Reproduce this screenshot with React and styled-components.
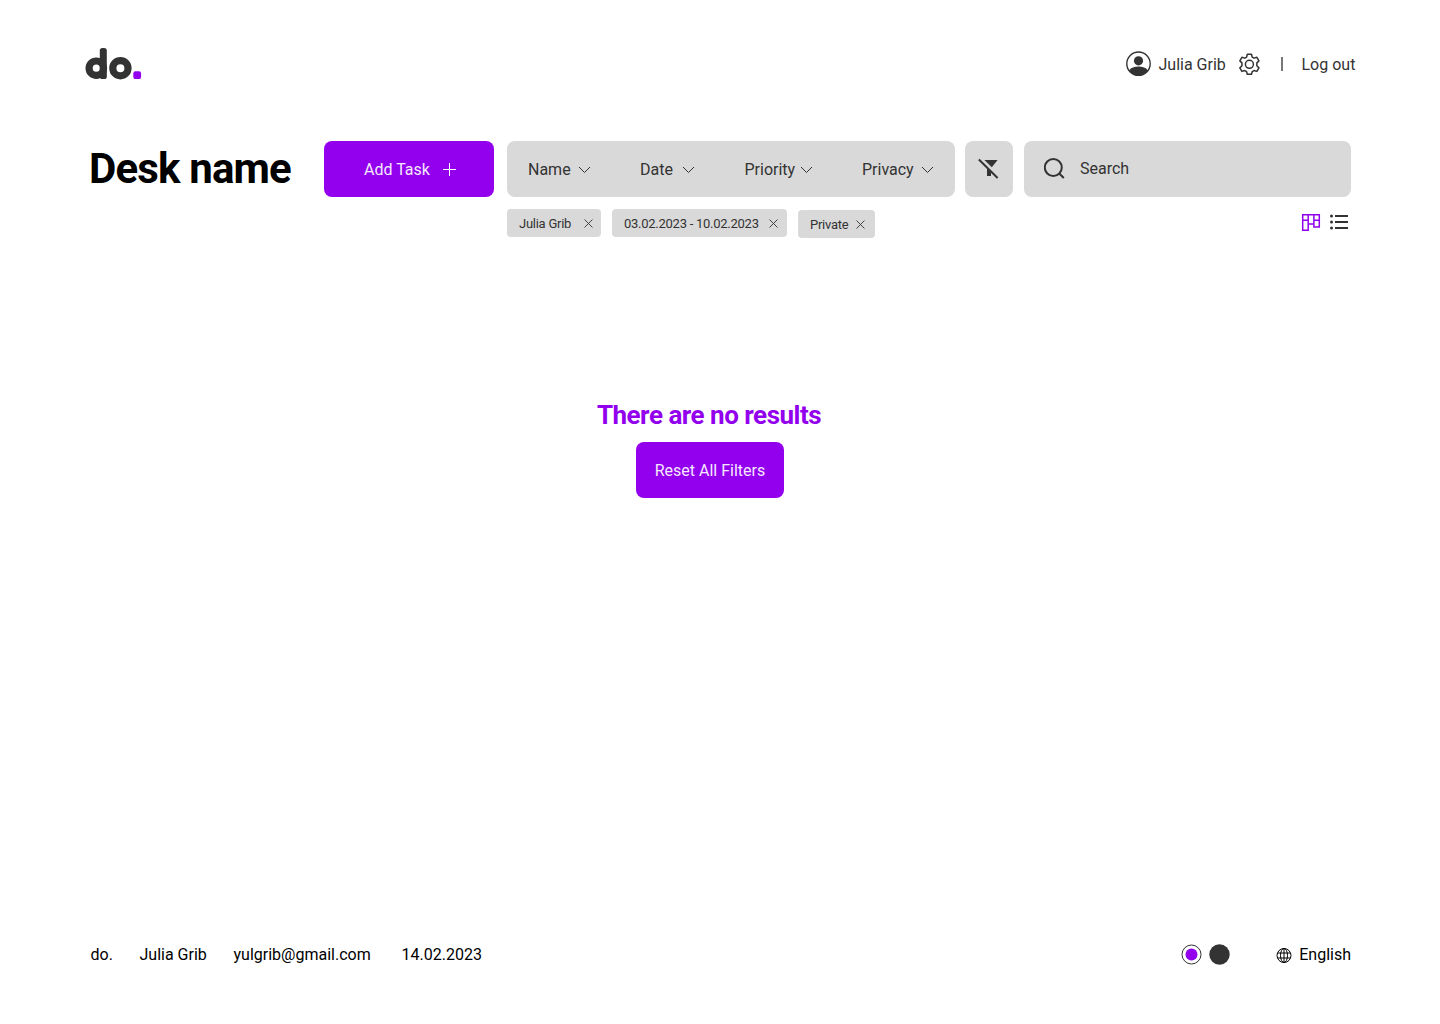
import React from "react";
import styled, { createGlobalStyle } from "styled-components";

const Global = createGlobalStyle`
  *, *::before, *::after { box-sizing: border-box; }
  body {
    margin: 0;
    background: #fff;
    color: #333;
    font: 400 16px/24px Roboto, "Liberation Sans", sans-serif;
  }
  button { font: inherit; border: 0; cursor: pointer; }
  svg { display: block; flex: none; }
`;

const Page = styled.div`
  width: 1440px;
  height: 1024px;
  display: flex;
  flex-direction: column;
`;

const Header = styled.header`
  height: 141px;
  padding: 40px 0 0 85px;
  display: flex;
  align-items: flex-start;
`;

const UserMenu = styled.nav`
  height: 48px;
  margin-left: 983px;
  display: flex;
  align-items: center;
`;

const Label = styled.span`
  flex: none;
  white-space: nowrap;
  width: ${(p) => (p.$w ? `${p.$w}px` : "auto")};
  padding-left: ${(p) => p.$pl || 0}px;
  padding-top: ${(p) => p.$pt || 0}px;
  letter-spacing: ${(p) => p.$ls || 0}px;
`;

const Divider = styled.i`
  width: 2px;
  height: 14px;
  margin: 0 18.5px 0 21px;
  background: #777;
`;

const Toolbar = styled.section`
  height: 56px;
  padding-left: 89px;
  display: flex;
`;

const Title = styled.h1`
  width: 235px;
  margin: 0;
  color: #000;
  font-size: 42px;
  line-height: 56px;
  font-weight: 700;
  letter-spacing: -0.84px;
  white-space: nowrap;
`;

const PrimaryButton = styled.button`
  width: ${(p) => p.$w}px;
  height: 56px;
  padding: ${(p) => p.$drop || 0}px 0 0 ${(p) => p.$shift || 0}px;
  display: flex;
  align-items: center;
  justify-content: center;
  gap: 13px;
  flex: none;
  border-radius: 8px;
  background: #9200ee;
  color: #f6e8ff;
`;

const Panel = styled.div`
  width: ${(p) => p.$w}px;
  height: 56px;
  margin-left: ${(p) => p.$gap}px;
  padding-left: ${(p) => p.$pad || 0}px;
  display: flex;
  align-items: center;
  flex: none;
  border-radius: 8px;
  background: #d9d9d9;
`;

const SearchLabel = styled.label`
  margin-left: 15px;
`;

const Filter = styled.div`
  width: ${(p) => p.$w}px;
  padding-top: 1px;
  display: flex;
  align-items: center;
  flex: none;
`;

const SubBar = styled.section`
  height: 42px;
  padding: 12px 0 0 507px;
  display: flex;
  align-items: flex-start;
`;

const Chip = styled.div`
  width: ${(p) => p.$w}px;
  height: 28px;
  margin-right: 11px;
  margin-top: ${(p) => p.$drop || 0}px;
  padding: 1px ${(p) => p.$pr}px 0 12px;
  display: flex;
  align-items: center;
  justify-content: space-between;
  border-radius: 4px;
  background: #d9d9d9;
  font-size: 13px;
`;

const Views = styled.div`
  margin-left: 415px;
  padding-top: 3px;
  display: flex;
  gap: 8px;
`;

const Empty = styled.main`
  flex: 1;
  width: 1420px;
  padding-top: 156px;
  display: flex;
  flex-direction: column;
  align-items: center;
`;

const EmptyTitle = styled.h2`
  margin: 0 2px 7px 0;
  color: #9200ee;
  font-size: 26px;
  line-height: 40px;
  font-weight: 700;
  letter-spacing: -0.5px;
`;

const Footer = styled.footer`
  height: 81px;
  padding: 0 89px 0 90.5px;
  display: flex;
  align-items: flex-start;
  color: #000;
`;

const Themes = styled.div`
  height: 24px;
  margin-left: auto;
  margin-right: 45.5px;
  display: flex;
  align-items: center;
`;

const Language = styled.div`
  display: flex;
  align-items: center;
  gap: 7.5px;

  svg { margin-top: 1px; }
`;

const Logo = () => (
  <svg width="57" height="40" viewBox="85 40 57 40" aria-label="do.">
    <circle cx="96.3" cy="68.2" r="7.2" fill="none" stroke="#333" strokeWidth="7.2" />
    <rect x="99.8" y="48" width="7" height="31" rx="2.6" fill="#333" />
    <circle cx="120.4" cy="68.2" r="7.6" fill="none" stroke="#333" strokeWidth="7.2" />
    <rect x="133.3" y="71.3" width="7.8" height="7.8" rx="2.2" fill="#9200ee" />
  </svg>
);

const UserIcon = () => (
  <svg width="26" height="26" viewBox="0 0 26 26" fill="#333">
    <circle cx="13.500" cy="12.700" r="11.700" fill="none" stroke="#333" strokeWidth="1.400" />
    <circle cx="13.500" cy="9.800" r="4.600" />
    <path d="M4.100 19.400C6 16.800 9.500 15.600 13.500 15.600s7.500 1.200 9.400 3.800C20.800 22.600 17.500 24.400 13.500 24.400s-7.300-1.800-9.400-5Z" />
  </svg>
);

const GearIcon = () => (
  <svg width="22" height="22" viewBox="-.4 0 22 22" fill="none" stroke="#333" strokeWidth="1.500" strokeLinejoin="round">
    <circle cx="11" cy="11.300" r="4" />
    <path d="M8.900 1.300h4.200l.7 2.800 1.800 1.050 2.900-.85 2.050 3.550-2.100 2.050v2.900l2.100 2.050-2.050 3.550-2.900-.85-1.800 1.050-.7 2.700H8.900l-.7-2.700-1.800-1.050-2.900.85-2.050-3.550 2.100-2.050v-2.900l-2.100-2.050L3.500 4.300l2.900.85 1.800-1.050Z" />
  </svg>
);

const Plus = () => (
  <svg width="13" height="13" viewBox="0 0 13 13" stroke="#fff">
    <path d="M6.500 0v13M0 6.500h13" />
  </svg>
);

const Chevron = () => (
  <svg width="13" height="8" viewBox="0 0 13 8" fill="none" stroke="#333">
    <path d="m1 1 5.500 5.500L12 1" />
  </svg>
);

const Close = () => (
  <svg width="9" height="9" viewBox="0 0 9 9" fill="none" stroke="#333" strokeWidth=".9">
    <path d="m.5.5 8 8m0-8-8 8" />
  </svg>
);

const FilterOff = () => (
  <svg width="22" height="22" viewBox="0 0 22 22" fill="#333">
    <path d="M6.400 2h13.200l-5.800 7.200Z" />
    <path d="M9 9.400v8.600h4v-4.600Z" />
    <path d="m.9 1.500 18.700 18.500" fill="none" stroke="#333" strokeWidth="2" />
  </svg>
);

const SearchIcon = () => (
  <svg width="21" height="22" viewBox="0 0 21 22" fill="none" stroke="#333" strokeWidth="2">
    <circle cx="9.300" cy="9.500" r="8.500" />
    <path d="m15.300 15.500 4.500 4.500" />
  </svg>
);

const BoardIcon = () => (
  <svg width="20" height="20" viewBox="0 0 20 20" fill="none" stroke="#9200ee" strokeWidth="1.500">
    <path d="M1.700 2.800h16.600v12.200h-5.400V12H7.200v6.200H1.700ZM1.700 8.200h5.500M12.900 8.200h5.400M7.200 2.800V12M12.900 2.800V12" />
  </svg>
);

const ListIcon = () => (
  <svg width="20" height="20" viewBox="0 0 20 20" stroke="#333" strokeWidth="2">
    <path d="M6 4h13M6 10h13M6 16h13" />
    <path d="M2.500 4h.01M2.500 10h.01M2.500 16h.01" strokeWidth="3" strokeLinecap="round" />
  </svg>
);

const Globe = () => (
  <svg width="16" height="16" viewBox="0 0 16 16" fill="none" stroke="#000">
    <circle cx="8" cy="7.500" r="7" />
    <ellipse cx="8" cy="7.500" rx="3.500" ry="7" />
    <path d="M8 .5v14M1.800 5h12.400M1.800 10h12.400" />
  </svg>
);

const ThemeDots = () => (
  <svg width="50" height="22" viewBox="0 0 50 22" fill="#333">
    <circle cx="11.500" cy="10.500" r="9.500" fill="#fff" stroke="#333" />
    <circle cx="11.500" cy="10.500" r="6" fill="#9200ee" />
    <circle cx="39.500" cy="10.500" r="10.200" />
  </svg>
);

const filters = [
  { name: "Name", item: 112, text: 50 },
  { name: "Date", item: 104.5, text: 42 },
  { name: "Priority", item: 117.5, text: 55 },
  { name: "Privacy", item: 72, text: 59 },
];

const chips = [
  { text: "Julia Grib", w: 94, ls: -0.26, pr: 8 },
  { text: "03.02.2023 - 10.02.2023", w: 175, ls: -0.26, pr: 9 },
  { text: "Private", w: 77, ls: -0.26, pr: 10, drop: 1 },
];

export default function App() {
  return (
    <Page>
      <Global />
      <Header>
        <Logo />
        <UserMenu>
          <UserIcon />
          <Label $w={87} $pl={7.5} $pt={1}>Julia Grib</Label>
          <GearIcon />
          <Divider />
          <Label $pt={1}>Log out</Label>
        </UserMenu>
      </Header>
      <Toolbar>
        <Title>Desk name</Title>
        <PrimaryButton $w={170} $shift={2} $drop={1}>
          Add Task <Plus />
        </PrimaryButton>
        <Panel $w={448} $gap={13} $pad={21}>
          {filters.map((f) => (
            <Filter key={f.name} $w={f.item}>
              <Label $w={f.text}>{f.name}</Label>
              <Chevron />
            </Filter>
          ))}
        </Panel>
        <Panel $w={48} $gap={10} $pad={13}>
          <FilterOff />
        </Panel>
        <Panel $w={327} $gap={11} $pad={20}>
          <SearchIcon />
          <SearchLabel>Search</SearchLabel>
        </Panel>
      </Toolbar>
      <SubBar>
        {chips.map((c) => (
          <Chip key={c.text} $w={c.w} $drop={c.drop} $pr={c.pr}>
            <Label $ls={c.ls}>{c.text}</Label>
            <Close />
          </Chip>
        ))}
        <Views>
          <BoardIcon />
          <ListIcon />
        </Views>
      </SubBar>
      <Empty>
        <EmptyTitle>There are no results</EmptyTitle>
        <PrimaryButton $w={148} $drop={1}>Reset All Filters</PrimaryButton>
      </Empty>
      <Footer>
        <Label $w={49}>do.</Label>
        <Label $w={94}>Julia Grib</Label>
        <Label $w={168}>yulgrib@gmail.com</Label>
        <Label>14.02.2023</Label>
        <Themes>
          <ThemeDots />
        </Themes>
        <Language>
          <Globe />
          <Label>English</Label>
        </Language>
      </Footer>
    </Page>
  );
}
